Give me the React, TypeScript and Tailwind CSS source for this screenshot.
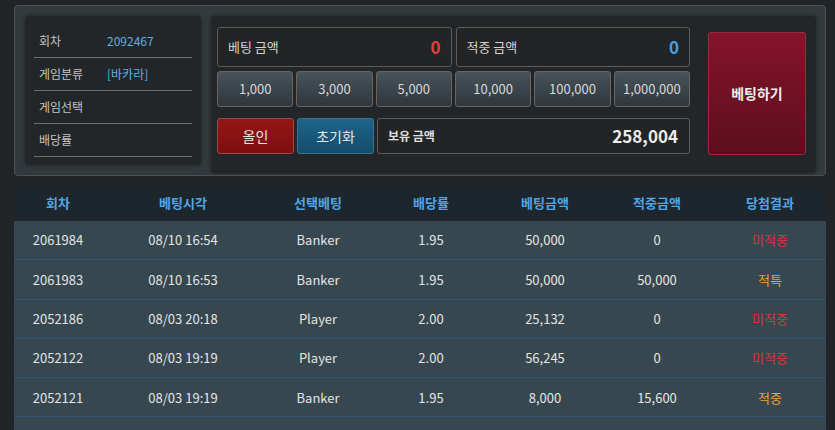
import React from "react";

const chips = ["1,000", "3,000", "5,000", "10,000", "100,000", "1,000,000"];

const rows = [
  { no: "2061984", time: "08/10 16:54", pick: "Banker", odds: "1.95", bet: "50,000", win: "0", result: "미적중" },
  { no: "2061983", time: "08/10 16:53", pick: "Banker", odds: "1.95", bet: "50,000", win: "50,000", result: "적특" },
  { no: "2052186", time: "08/03 20:18", pick: "Player", odds: "2.00", bet: "25,132", win: "0", result: "미적중" },
  { no: "2052122", time: "08/03 19:19", pick: "Player", odds: "2.00", bet: "56,245", win: "0", result: "미적중" },
  { no: "2052121", time: "08/03 19:19", pick: "Banker", odds: "1.95", bet: "8,000", win: "15,600", result: "적중" },
];

const cols = "grid grid-cols-[88px_162px_108px_118px_110px_114px_112px]";

function InfoRow({ label, value }: { label: string; value?: string }) {
  return (
    <div className="flex h-[33px] items-center border-b border-[#6b6d6e] pl-[5px]">
      <span className="w-[68px] text-[12px] text-[#c4c4c4]">{label}</span>
      {value && <span className="text-[12px] text-[#5fb0e0]">{value}</span>}
    </div>
  );
}

export default function App() {
  return (
    <div
      className="min-h-screen bg-[#222527] pl-[14px] pr-[9px] pt-[5px]"
      style={{ fontFamily: '"Noto Sans CJK KR", "Noto Sans", sans-serif' }}
    >
      {/* Bet slip */}
      <div className="flex h-[171px] gap-[10px] rounded-[4px] border border-[#4d5355] bg-[#33393c] pl-[10px] pr-[9px] pt-[10px]">
        <div className="h-[149px] w-[176px] shrink-0 rounded-[4px] bg-[#232628] px-[9px] pt-[9px] shadow-[0_0_4px_rgba(0,0,0,0.4)]">
          <InfoRow label="회차" value="2092467" />
          <InfoRow label="게임분류" value="[바카라]" />
          <InfoRow label="게임선택" />
          <InfoRow label="배당률" />
        </div>

        <div className="flex h-[157px] flex-1 gap-[18px] rounded-[4px] bg-[#232628] pl-[6px] pr-[10px] pt-[11px] shadow-[0_0_4px_rgba(0,0,0,0.4)]">
          <div className="flex w-[473px] shrink-0 flex-col">
            <div className="flex gap-[4px]">
              <div className="flex h-[40px] flex-1 items-center justify-between rounded-[3px] border border-[#5e5a55] bg-[#222426] pl-[10px] pr-[10px]">
                <span className="text-[13px] text-[#d2d2d2]">베팅 금액</span>
                <span className="text-[17px] font-bold text-[#e0413f]">0</span>
              </div>
              <div className="flex h-[40px] flex-1 items-center justify-between rounded-[3px] border border-[#5e5a55] bg-[#222426] pl-[10px] pr-[10px]">
                <span className="text-[13px] text-[#d2d2d2]">적중 금액</span>
                <span className="text-[17px] font-bold text-[#4c9fe0]">0</span>
              </div>
            </div>

            <div className="mt-[4px] grid grid-cols-6 gap-[3px]">
              {chips.map((c) => (
                <button
                  key={c}
                  className="flex h-[36px] items-center justify-center rounded-[3px] border border-[#6a665f] bg-gradient-to-b from-[#48535a] to-[#2f373c] text-[13px] text-[#d8d8d8]"
                >
                  {c}
                </button>
              ))}
            </div>

            <div className="mt-[11px] flex gap-[3px]">
              <button className="flex h-[36px] w-[77px] items-center justify-center rounded-[3px] border border-[#9c4848] bg-gradient-to-b from-[#951616] to-[#7c0f0f] text-[14px] text-[#e6e6e6]">
                올인
              </button>
              <button className="flex h-[36px] w-[77px] items-center justify-center rounded-[3px] border border-[#3a7090] bg-gradient-to-b from-[#1d658c] to-[#154c6b] text-[14px] text-[#e6e6e6]">
                초기화
              </button>
              <div className="flex h-[36px] flex-1 items-center justify-between rounded-[3px] border border-[#5e5a55] bg-[#222426] pl-[10px] pr-[11px]">
                <span className="text-[12px] font-bold text-[#e0e0e0]">보유 금액</span>
                <span className="text-[17px] font-bold text-[#ececec]">258,004</span>
              </div>
            </div>
          </div>

          <div className="shrink-0 pt-[5px]">
            <button className="flex h-[123px] w-[98px] items-center justify-center rounded-[3px] border border-[#9b2b3c] bg-gradient-to-b from-[#85142a] to-[#5c0e1e] text-[14px] font-bold text-[#ececec]">
              베팅하기
            </button>
          </div>
        </div>
      </div>

      {/* History */}
      <div className="mt-[9px]">
        <div className={`${cols} h-[36px] items-center bg-[#1e262d] text-[13px] font-bold text-[#4ea6e6]`}>
          {["회차", "베팅시각", "선택베팅", "배당률", "베팅금액", "적중금액", "당첨결과"].map((h) => (
            <div key={h} className="text-center">
              {h}
            </div>
          ))}
        </div>
        {rows.map((r) => (
          <div
            key={r.no + r.time}
            className={`${cols} h-[39.3px] items-center border-b border-[#2e5670] bg-[#37474f] text-[13px] text-[#e4e4e4]`}
          >
            <div className="text-center">{r.no}</div>
            <div className="text-center">{r.time}</div>
            <div className="text-center">{r.pick}</div>
            <div className="text-center">{r.odds}</div>
            <div className="text-center">{r.bet}</div>
            <div className="text-center">{r.win}</div>
            <div className={`text-center ${r.result === "미적중" ? "text-[#dc343d]" : "text-[#e9a43c]"}`}>
              {r.result}
            </div>
          </div>
        ))}
        <div className="h-[39px] bg-[#37474f]" />
      </div>
    </div>
  );
}
